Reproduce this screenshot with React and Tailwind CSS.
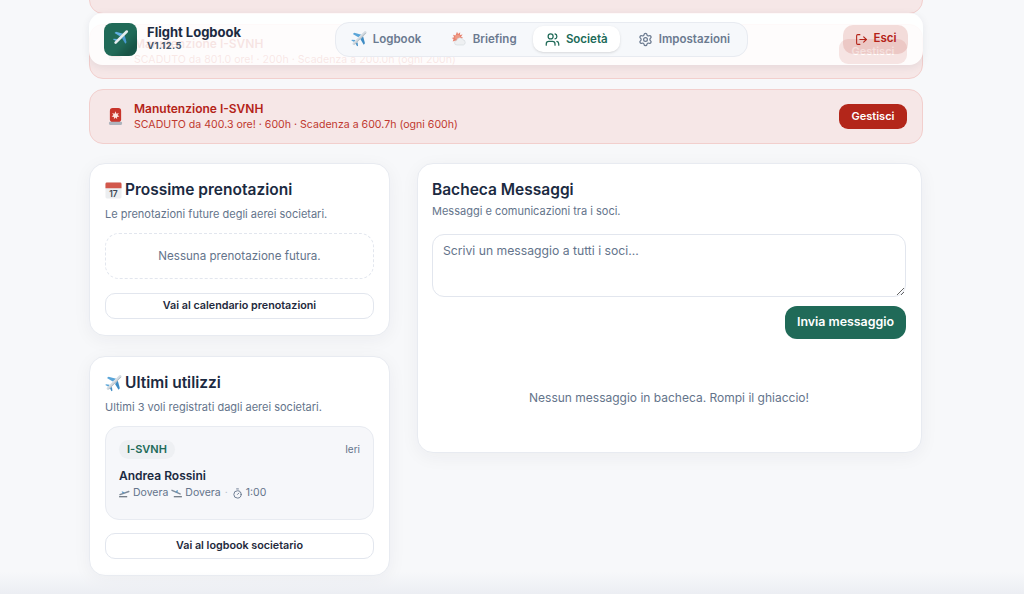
import React from 'react'
import { LogOut, Settings, Timer, Users } from 'lucide-react'

const PlaneIcon = ({ className }) => (
  <svg viewBox="1 2 22 21" className={className}>
    <path d="M11 10 3.500 5.500 5.500 3.800 15.500 6.500Z" fill="#5aa5d8" />
    <path d="M14 13 18.500 20.500 20.200 18.500 17.500 8.500Z" fill="#3f8cc4" />
    <path d="M7 14 2.200 13.400 1.500 14.600 6 17Z" fill="#5aa5d8" />
    <path d="M10 17 10.600 21.800 9.400 22.500 7 18Z" fill="#3f8cc4" />
    <path d="M5 19 20.500 3.500" stroke="#d5dce2" strokeWidth="3.600" strokeLinecap="round" />
    <path d="M6 19.500 21 4.500" stroke="#9fabb5" strokeWidth="1" strokeLinecap="round" />
  </svg>
)

const LogoIcon = () => (
  <svg viewBox="0 0 33 33" className="w-[33px] h-[33px] shrink-0">
    <defs>
      <pattern id="dots" width="1.600" height="1.600" patternUnits="userSpaceOnUse">
        <circle cx="0.800" cy="0.800" r="0.550" fill="#0b2e27" />
      </pattern>
      <linearGradient id="fade" x1="0.250" y1="0.250" x2="1" y2="1">
        <stop offset="0.450" stopColor="#fff" stopOpacity="0" />
        <stop offset="0.750" stopColor="#fff" stopOpacity="1" />
      </linearGradient>
      <mask id="fadeMask">
        <rect width="33" height="33" fill="url(#fade)" />
      </mask>
    </defs>
    <rect width="33" height="33" rx="8" fill="#206a58" />
    <rect width="33" height="33" rx="8" fill="url(#dots)" mask="url(#fadeMask)" />
    <g transform="translate(8 6) scale(0.720)">
      <path d="M11 10 3.500 5.500 5.500 3.800 15.500 6.500Z" fill="#62b0e4" />
      <path d="M14 13 18.500 20.500 20.200 18.500 17.500 8.500Z" fill="#4a9ad2" />
      <path d="M7 14 2.200 13.400 1.500 14.600 6 17Z" fill="#62b0e4" />
      <path d="M5 19 20.500 3.500" stroke="#e8edf0" strokeWidth="3.600" strokeLinecap="round" />
    </g>
  </svg>
)

const CloudSunIcon = () => (
  <svg viewBox="0 0 24 24" className="w-[16px] h-[16px] shrink-0">
    <path d="M9 1l1.600 3.600L13.800 2l-.4 4 4-.6-2.400 3.200 3 1.600-9 6-3-1.500-3.400 1 1.200-3.600L1 10.500l3.800-1L3 5.500l3.800 1.200Z" fill="#e8836f" />
    <circle cx="10" cy="9.500" r="4" fill="#ee9a85" />
    <path d="M9 21a3.500 3.500 0 0 1-.5-7 5 5 0 0 1 9.500-.8A4 4 0 0 1 18.500 21Z" fill="#eef0f2" stroke="#c3c9cf" strokeWidth="0.600" />
  </svg>
)

const LightIcon = () => (
  <svg viewBox="0 0 16 20" className="w-[15px] h-[19px] shrink-0">
    <rect x="2" y="1" width="12" height="15" rx="3" fill="#c8352b" />
    <path d="M8 4.500l1 2.500 2.600-.8-1.400 2.300 2 1.500-2.600.4.200 2.600-1.800-1.900-1.800 1.900.2-2.600-2.600-.4 2-1.500-1.400-2.300 2.600.8Z" fill="#fbe4df" />
    <rect x="1" y="15.500" width="14" height="3.500" rx="1.200" fill="#aeb4bd" />
  </svg>
)

const CalendarIcon = () => (
  <svg viewBox="0 0 18 18" className="w-[17px] h-[17px] shrink-0">
    <rect x="0.500" y="0.500" width="17" height="17" rx="1.500" fill="#eceef0" />
    <path d="M0.500 2a1.500 1.500 0 0 1 1.500-1.500h14A1.500 1.500 0 0 1 17.500 2v4.500H.500Z" fill="#d2574b" />
    <text x="9" y="15.800" textAnchor="middle" fontSize="9" fontFamily="Inter, sans-serif" fill="#3b4652">17</text>
  </svg>
)

// emoji-like departure / arrival planes with the runway strip under them
const DepartureIcon = () => (
  <svg viewBox="0 0 12 10" className="w-[11px] h-[9px] shrink-0">
    <path d="M1 6.200 10.800 2.800" stroke="#7d8a99" strokeWidth="1.600" strokeLinecap="round" />
    <path d="M4 5 2.800 2.800 4 2.800 6.500 4.200Z" fill="#5f99c4" />
    <rect x="0" y="8" width="9" height="1.200" fill="#56616e" />
  </svg>
)

const ArrivalIcon = () => (
  <svg viewBox="0 0 12 10" className="w-[11px] h-[9px] shrink-0">
    <path d="M1 1.500 10 5.500" stroke="#7d8a99" strokeWidth="1.600" strokeLinecap="round" />
    <path d="M5 3.500 6.500 1.200 7.500 1.500 7 4.500Z" fill="#5f99c4" />
    <rect x="3" y="8" width="9" height="1.200" fill="#56616e" />
  </svg>
)

const Alert = ({ hours, every, due }) => (
  <div className="flex items-center h-[55px] pl-[16px] pr-[15px] rounded-[14px] border border-[#f2cfcd] bg-[#f6e7e7]">
    <div className="w-[18px] mr-[10px] flex justify-center"><LightIcon /></div>
    <div className="flex-1 min-w-0">
      <p className="text-[12px] leading-[16px] font-semibold text-[#b42318]">Manutenzione I-SVNH</p>
      <p className="text-[10.6px] leading-[15px] text-[#c0392f]">
        SCADUTO da {hours} ore! · {every} · Scadenza a {due} (ogni {every})
      </p>
    </div>
    <button className="w-[68px] h-[25px] rounded-[9px] bg-[#b3261a] text-white text-[11px] font-semibold">Gestisci</button>
  </div>
)

const Card = ({ className, children }) => (
  <div className={`bg-white rounded-[16px] border border-[#e8ebf1] shadow-[0_4px_18px_rgba(30,41,59,0.05)] ${className}`}>
    {children}
  </div>
)

const OutlineButton = ({ children }) => (
  <button className="w-full h-[26px] rounded-[10px] border border-[#e2e6ee] bg-white text-[10.75px] font-semibold text-[#1e293b]">
    {children}
  </button>
)

const NavItem = ({ icon, label, active, className }) => (
  <div className={`flex items-center gap-[6px] h-[26px] rounded-[10px] text-[11.5px] font-semibold ${active ? 'bg-white text-[#206a58] shadow-sm' : 'text-[#6b7a90]'} ${className}`}>
    {icon}
    <span className="mt-[1px]">{label}</span>
  </div>
)

export default function App() {
  return (
    <div className="relative h-[594px] overflow-hidden bg-[#f7f8fa] font-['Inter',sans-serif]">
      <div className="w-[834px] ml-[89px] -mt-[41px] flex flex-col gap-[10px]">
        <Alert hours="120.4" every="50h" due="80.0h" />
        <Alert hours="801.0" every="200h" due="200.0h" />
        <Alert hours="400.3" every="600h" due="600.7h" />

        <div className="grid grid-cols-[301px_505px] gap-[27px] mt-[9px]">
          <div className="flex flex-col gap-[20px]">
            <Card className="h-[173px] pt-[15px] px-[15px]">
              <h2 className="flex items-center gap-[3px] h-[22px] text-[15.5px] font-semibold text-[#1b2a41]">
                <CalendarIcon />
                Prossime prenotazioni
              </h2>
              <p className="mt-[5px] text-[11px] leading-[16px] text-[#64748b]">Le prenotazioni future degli aerei societari.</p>
              <div className="mt-[11px] h-[46px] pt-[2px] flex items-center justify-center rounded-[14px] border border-dashed border-[#e2e6ee] text-[11.6px] text-[#64748b]">
                Nessuna prenotazione futura.
              </div>
              <div className="mt-[12px]">
                <OutlineButton>Vai al calendario prenotazioni</OutlineButton>
              </div>
            </Card>

            <Card className="h-[220px] pt-[15px] px-[15px]">
              <h2 className="flex items-center gap-[3px] h-[22px] text-[15.5px] font-semibold text-[#1b2a41]">
                <PlaneIcon className="w-[17px] h-[17px] shrink-0" />
                Ultimi utilizzi
              </h2>
              <p className="mt-[5px] text-[11px] leading-[16px] text-[#64748b]">Ultimi 3 voli registrati dagli aerei societari.</p>
              <div className="mt-[11px] h-[94px] rounded-[14px] border border-[#e8ebf1] bg-[#f6f7fa] px-[13px] pt-[13px]">
                <div className="flex items-center justify-between">
                  <span className="flex items-center h-[19px] px-[8px] rounded-full bg-[#eef0f3] text-[11px] font-semibold text-[#206a58]">I-SVNH</span>
                  <span className="text-[10px] text-[#64748b]">Ieri</span>
                </div>
                <p className="mt-[9px] text-[12px] leading-[16px] font-semibold text-[#1b2a41]">Andrea Rossini</p>
                <div className="mt-[1px] flex items-center gap-[3px] text-[10.5px] leading-[16px] text-[#64748b]">
                  <DepartureIcon />
                  <span>Dovera</span>
                  <ArrivalIcon />
                  <span>Dovera</span>
                  <span className="mx-[1px] text-[#b8c0cc]">·</span>
                  <Timer size={11} />
                  <span>1:00</span>
                </div>
              </div>
              <div className="mt-[11px]">
                <OutlineButton>Vai al logbook societario</OutlineButton>
              </div>
            </Card>
          </div>

          <Card className="h-[290px] pt-[15px] pl-[14px] pr-[15px] flex flex-col">
            <h2 className="flex items-center h-[22px] text-[15.5px] font-semibold text-[#1b2a41]">Bacheca Messaggi</h2>
            <p className="mt-[2px] text-[11px] leading-[16px] text-[#64748b]">Messaggi e comunicazioni tra i soci.</p>
            <textarea
              className="mt-[15px] h-[63px] w-full rounded-[12px] border border-[#e2e6ee] bg-white px-[10px] py-[7px] text-[12.2px] leading-[18px] placeholder:text-[#64748b] outline-none"
              placeholder="Scrivi un messaggio a tutti i soci..."
            />
            <div className="mt-[9px] flex justify-end">
              <button className="w-[121px] h-[33px] rounded-[12px] bg-[#206a58] text-white text-[12.4px] font-semibold">Invia messaggio</button>
            </div>
            <p className="mt-[51px] text-center text-[12px] leading-[16px] text-[#64748b]">Nessun messaggio in bacheca. Rompi il ghiaccio!</p>
          </Card>
        </div>
      </div>

      <header className="absolute left-[89px] top-[13px] w-[834px] h-[52px] flex items-center justify-between pl-[15px] pr-[15px] rounded-[14px] bg-white/88 shadow-[0_2px_8px_rgba(30,41,59,0.08)]">
        <div className="flex items-center gap-[10px] w-[230.5px]">
          <LogoIcon />
          <div className="-mt-[1px]">
            <p className="text-[13px] leading-[14px] font-bold text-[#1b2a41]">Flight Logbook</p>
            <p className="text-[9.5px] leading-[13px] font-bold tracking-[0.03em] text-[#475569]">V1.12.5</p>
          </div>
        </div>
        <nav className="flex items-center h-[35px] w-[413px] rounded-[14px] border border-[#e8ebf1] bg-[#f6f8fb] pl-[15px]">
          <NavItem icon={<PlaneIcon className="w-[16px] h-[16px]" />} label="Logbook" className="w-[100px]" />
          <NavItem icon={<CloudSunIcon />} label="Briefing" className="w-[82px]" />
          <NavItem icon={<Users size={15} />} label="Società" active className="w-[87px] justify-center" />
          <NavItem icon={<Settings size={15} />} label="Impostazioni" className="ml-[18px]" />
        </nav>
        <div className="w-[160px] flex justify-end">
          <button className="flex items-center justify-center gap-[6px] w-[65px] h-[29px] rounded-[10px] bg-[#b3261a]/15 text-[#b42318] text-[11.5px] font-semibold">
            <LogOut size={13} />
            Esci
          </button>
        </div>
      </header>

      <div className="absolute left-0 right-0 bottom-0 h-[22px] bg-gradient-to-b from-transparent to-[#eceef3]" />
    </div>
  )
}
